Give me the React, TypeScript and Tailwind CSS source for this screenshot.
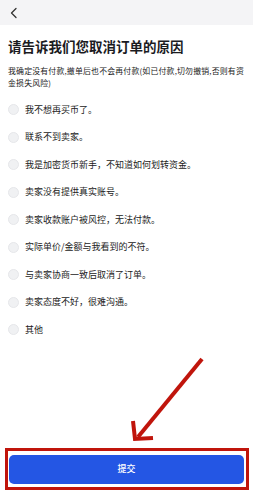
import React from "react";

const reasons = [
  "我不想再买币了。",
  "联系不到卖家。",
  "我是加密货币新手，不知道如何划转资金。",
  "卖家没有提供真实账号。",
  "卖家收款账户被风控，无法付款。",
  "实际单价/金额与我看到的不符。",
  "与卖家协商一致后取消了订单。",
  "卖家态度不好，很难沟通。",
  "其他",
];

export default function App() {
  return (
    <div
      className="relative w-[253px] h-[500px] bg-white overflow-hidden text-[#1b1b1f]"
      style={{ fontFamily: '"Noto Sans CJK SC", "Noto Sans", sans-serif' }}
    >
      <div className="h-[25px] bg-[#f4f4f6] flex items-center pl-[10px]">
        <svg width="8" height="12" viewBox="0 0 8 12" className="mt-[1px]">
          <polyline points="6,1.5 1.5,6 6,10.5" fill="none" stroke="#333" strokeWidth="1.3" strokeLinecap="round" strokeLinejoin="round" />
        </svg>
      </div>
      <div className="px-2">
        <h1 className="mt-[12px] text-[13.5px] leading-[18px] font-bold tracking-[0px]">请告诉我们您取消订单的原因</h1>
        <p className="mt-[10px] text-[7.9px] leading-[12px] text-[#222] whitespace-nowrap tracking-[0.18px]">
          我确定没有付款,撤单后也不会再付款(如已付款,切勿撤销,否则有资
          <br />
          金损失风险)
        </p>
        <div className="mt-[7px] flex flex-col">
          {reasons.map((r) => (
            <div key={r} className="h-[27.5px] flex items-center">
              <span className="w-[11px] h-[11px] rounded-full bg-[#f0f1f3] border border-[#e6e7ea] shrink-0" />
              <span className="ml-[6px] text-[9px] leading-[12px] text-[#222]">{r}</span>
            </div>
          ))}
        </div>
        <button className="mt-[111px] ml-[1px] w-[235px] h-[29px] rounded-[5px] bg-[#2456e4] text-white text-[9px] font-medium flex items-center justify-center">
          提交
        </button>
      </div>
      <div className="absolute left-[5px] top-[448px] w-[243.5px] h-[42px] border-[3px] border-[#c0150c]" />
      <svg className="absolute left-0 top-0" width="253" height="500" viewBox="0 0 253 500">
        <g stroke="#c0150c" strokeWidth="4" fill="none" strokeLinecap="butt" strokeLinejoin="miter">
          <line x1="202" y1="359" x2="138" y2="437" />
          <polyline points="133,421 135,439 153,438" />
        </g>
      </svg>
    </div>
  );
}
